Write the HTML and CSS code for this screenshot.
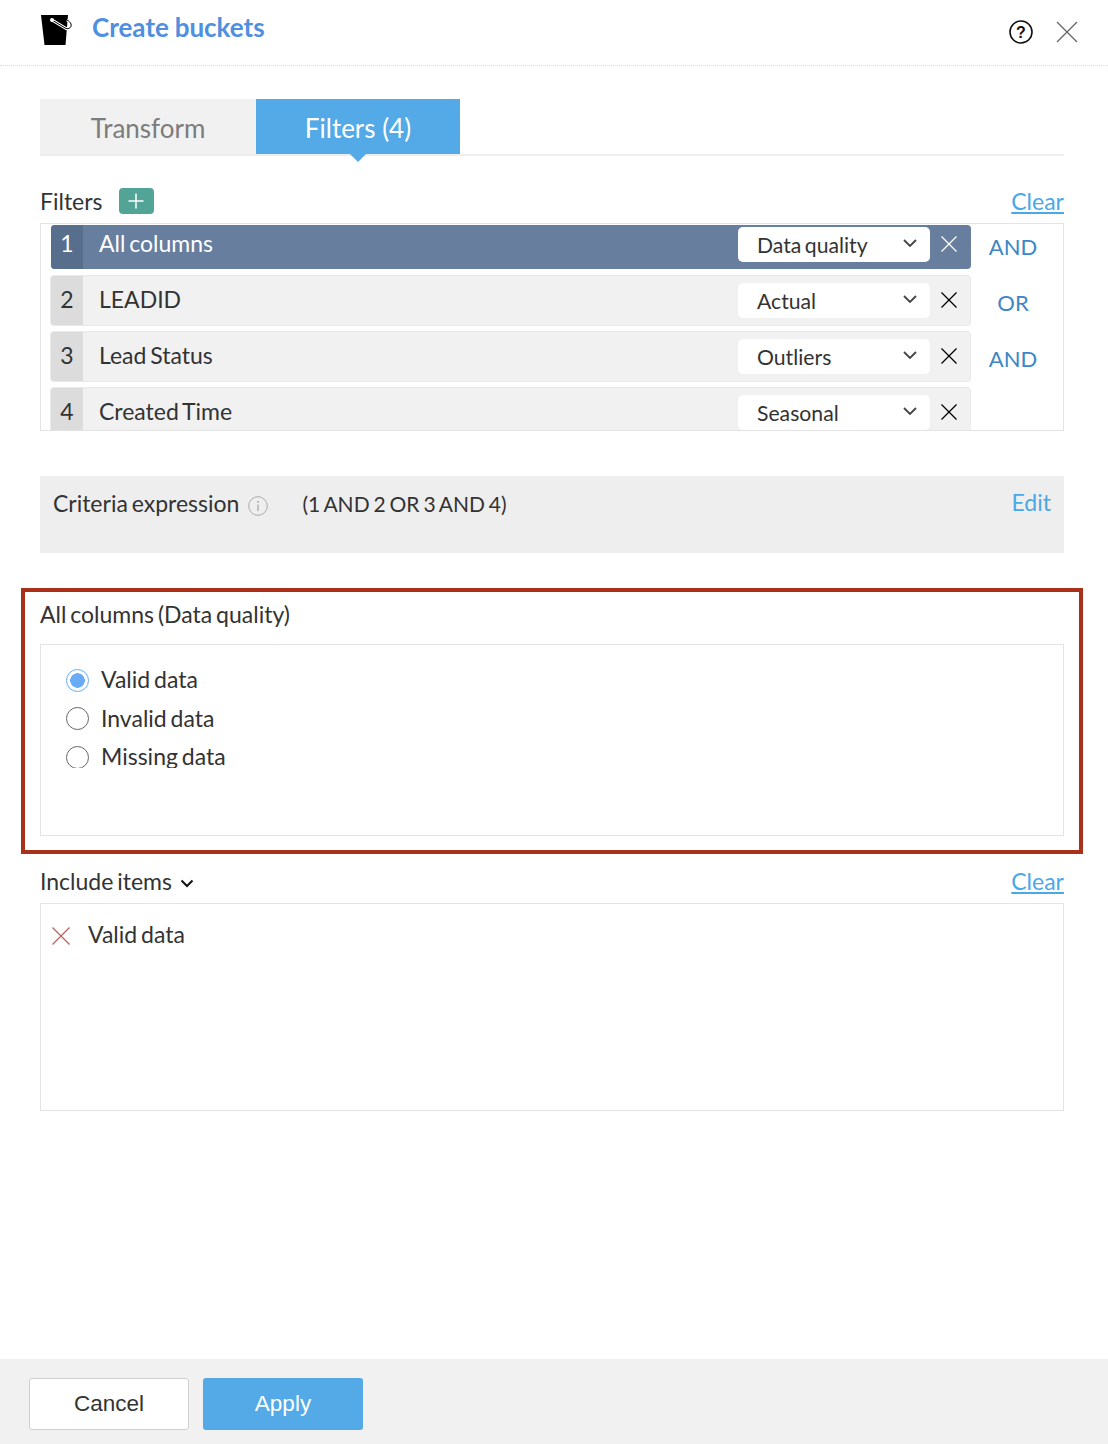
FILE: index.html
```html
<!DOCTYPE html>
<html lang="en">
<head>
<meta charset="utf-8">
<title>Create buckets</title>
<link rel="stylesheet" href="styles.css">
</head>
<body>
<div class="page">
  <header class="header">
    <svg class="logo" viewBox="0 0 32 31" width="32" height="31">
      <path d="M0 0H27L24.500 30H3.500Z" fill="#000"/>
      <path d="M11 5L25 13.500C28 14.500 31 12 30 9C29.500 7.500 28 6 26 5" fill="none" stroke="#fff" stroke-width="3"/>
      <path d="M11 5L25 13.500C28 14.500 31 12 30 9C29.500 7.500 28 6 26 5" fill="none" stroke="#000" stroke-width="1"/>
      <circle cx="11" cy="5" r="2" fill="#fff"/>
    </svg>
    <h1 class="title">Create buckets</h1>
    <div class="header-icons">
      <svg viewBox="0 0 24 24" width="24" height="24"><circle cx="12" cy="12" r="11" fill="none" stroke="#111" stroke-width="1.600"/><text x="12" y="17.500" class="help-mark">?</text></svg>
      <svg class="close" viewBox="0 0 22 22" width="22" height="22"><path d="M1 1L21 21M21 1L1 21" stroke="#666" stroke-width="1.300" fill="none"/></svg>
    </div>
  </header>

  <main class="main">
    <div class="tabs">
      <div class="tab">Transform</div>
      <div class="tab tab-active">Filters (4)</div>
    </div>

    <div class="label-row filters-label">
      <div class="label-left">
        <span>Filters</span>
        <span class="add"><svg viewBox="0 0 18 18" width="18" height="18"><path d="M9 1.500V16.500M1.500 9H16.500" stroke="#fff" stroke-width="1.500"/></svg></span>
      </div>
      <a class="link">Clear</a>
    </div>

    <div class="filter-box">
      <div class="filter-rows">
        <div class="filter-row row-active">
          <div class="num">1</div>
          <div class="name">All columns</div>
          <div class="select"><span class="select-text">Data quality</span><svg class="chev" viewBox="0 0 14 8" width="14" height="8"><path d="M1 1L7 7L13 1" fill="none" stroke="#444" stroke-width="1.800"/></svg></div>
          <svg class="x" viewBox="0 0 16 16" width="16" height="16"><path d="M0.500 0.500L15.500 15.500M15.500 0.500L0.500 15.500" stroke="#fff" stroke-width="1.300"/></svg>
        </div>
        <div class="filter-row">
          <div class="num">2</div>
          <div class="name">LEADID</div>
          <div class="select"><span class="select-text">Actual</span><svg class="chev" viewBox="0 0 14 8" width="14" height="8"><path d="M1 1L7 7L13 1" fill="none" stroke="#444" stroke-width="1.800"/></svg></div>
          <svg class="x" viewBox="0 0 16 16" width="16" height="16"><path d="M0.500 0.500L15.500 15.500M15.500 0.500L0.500 15.500" stroke="#000" stroke-width="1.300"/></svg>
        </div>
        <div class="filter-row">
          <div class="num">3</div>
          <div class="name">Lead Status</div>
          <div class="select"><span class="select-text">Outliers</span><svg class="chev" viewBox="0 0 14 8" width="14" height="8"><path d="M1 1L7 7L13 1" fill="none" stroke="#444" stroke-width="1.800"/></svg></div>
          <svg class="x" viewBox="0 0 16 16" width="16" height="16"><path d="M0.500 0.500L15.500 15.500M15.500 0.500L0.500 15.500" stroke="#000" stroke-width="1.300"/></svg>
        </div>
        <div class="filter-row">
          <div class="num">4</div>
          <div class="name">Created Time</div>
          <div class="select"><span class="select-text">Seasonal</span><svg class="chev" viewBox="0 0 14 8" width="14" height="8"><path d="M1 1L7 7L13 1" fill="none" stroke="#444" stroke-width="1.800"/></svg></div>
          <svg class="x" viewBox="0 0 16 16" width="16" height="16"><path d="M0.500 0.500L15.500 15.500M15.500 0.500L0.500 15.500" stroke="#000" stroke-width="1.300"/></svg>
        </div>
      </div>
      <div class="ops">
        <div class="op">AND</div>
        <div class="op">OR</div>
        <div class="op">AND</div>
      </div>
    </div>

    <div class="criteria">
      <div class="criteria-left">
        <span>Criteria expression</span>
        <svg class="info" viewBox="0 0 20 20" width="20" height="20"><circle cx="10" cy="10" r="9.300" fill="none" stroke="#aaa" stroke-width="1"/><path d="M10 8.500V15" stroke="#999" stroke-width="1.100"/><circle cx="10" cy="5.800" r="0.900" fill="#999"/></svg>
        <span class="expr">(1 AND 2 OR 3 AND 4)</span>
      </div>
      <a class="edit">Edit</a>
    </div>

    <section class="highlight">
      <div class="hl-title">All columns (Data quality)</div>
      <div class="options">
        <div class="option-list">
          <label class="option"><span class="radio radio-on"></span>Valid data</label>
          <label class="option"><span class="radio"></span>Invalid data</label>
          <label class="option"><span class="radio"></span>Missing data</label>
        </div>
      </div>
    </section>

    <div class="label-row include-label">
      <div class="label-left include-left">
        <span>Include items</span>
        <svg viewBox="0 0 14 9" width="14" height="9"><path d="M1.500 1.500L7 7L12.500 1.500" fill="none" stroke="#111" stroke-width="2"/></svg>
      </div>
      <a class="link">Clear</a>
    </div>
    <div class="include-box">
      <svg viewBox="0 0 18 18" width="18" height="18"><path d="M0.500 0.500L17.500 17.500M17.500 0.500L0.500 17.500" stroke="#b9605c" stroke-width="1.200"/></svg>
      <span>Valid data</span>
    </div>
  </main>

  <footer class="footer">
    <button class="btn btn-cancel">Cancel</button>
    <button class="btn btn-apply">Apply</button>
  </footer>
</div>
</body>
</html>
```
FILE: styles.css
```css
* { box-sizing: border-box; }
html, body { margin: 0; padding: 0; }
body {
  font-family: Lato, "Open Sans", sans-serif;
  color: #333;
  background: #fff;
  font-size: 22px;
  word-spacing: -2px;
}
.page {
  width: 1108px;
  height: 1444px;
  display: flex;
  flex-direction: column;
  overflow: hidden;
}
.header {
  height: 66px;
  flex: none;
  display: flex;
  align-items: flex-start;
  padding: 15px 30px 0 41px;
  border-bottom: 1px dotted #dcdcdc;
}
.logo { flex: none; }
.title {
  margin: -4px 0 0 19px;
  font-size: 26px;
  line-height: 32px;
  font-weight: 700;
  color: #4f8fdf;
  word-spacing: -0.500px;
}
.header-icons {
  margin-left: auto;
  display: flex;
  align-items: center;
  gap: 23px;
  padding-top: 5px;
}
.help-mark {
  font-family: "Liberation Sans", sans-serif;
  font-size: 16px;
  font-weight: 700;
  text-anchor: middle;
  fill: #111;
}
.main {
  flex: 1;
  padding: 33px 44px 0 40px;
}
.tabs {
  display: flex;
  height: 57px;
  border-bottom: 2px solid #eee;
}
.tab {
  width: 216px;
  height: 55px;
  background: #f1f1f1;
  color: #7c7c7c;
  font-size: 26px;
  line-height: 59px;
  text-align: center;
  word-spacing: 0;
}
.tab-active {
  width: 204px;
  background: #53aae6;
  color: #fff;
  position: relative;
}
.tab-active::after {
  content: "";
  position: absolute;
  left: 94px;
  top: 55px;
  border: 8px solid transparent;
  border-top-color: #53aae6;
  border-bottom: 0;
}
.label-row {
  display: flex;
  justify-content: space-between;
  align-items: center;
}
.filters-label {
  height: 34px;
  margin-top: 28px;
  margin-bottom: 5px;
  font-size: 23px;
  line-height: 34px;
}
.label-left {
  display: flex;
  align-items: center;
  gap: 16px;
}
.add {
  width: 35px;
  height: 26px;
  border-radius: 4px;
  background: #52a596;
  display: flex;
  align-items: center;
  justify-content: center;
}
.link {
  color: #4aa8e8;
  text-decoration: underline;
  font-size: 23px;
}
.filter-box {
  height: 208px;
  border: 1px solid #e3e3e3;
  display: flex;
  overflow: hidden;
  padding: 1px 0 0 9px;
}
.filter-rows {
  width: 921px;
  display: flex;
  flex-direction: column;
  gap: 5px;
  flex: none;
}
.filter-row {
  height: 51px;
  flex: none;
  background: #f1f1f1;
  border: 1px solid #e9e9e9;
  border-radius: 4px;
  display: flex;
  align-items: flex-start;
  overflow: hidden;
}
.row-active {
  height: 44px;
  margin: 0 0 1px 1px;
  background: #677e9f;
  border: 0;
  color: #fff;
}
.num {
  width: 32px;
  height: 100%;
  flex: none;
  background: #dcdcdc;
  text-align: center;
  font-size: 23px;
  line-height: 47px;
}
.row-active .num {
  background: #586e8d;
}
.name {
  flex: 1;
  padding-left: 16px;
  font-size: 23px;
  line-height: 47px;
}
.row-active .name,
.row-active .num {
  line-height: 37px;
}
.select {
  width: 192px;
  height: 35px;
  margin-top: 7px;
  background: #fff;
  border-radius: 5px;
  color: #333;
  font-size: 21.200px;
  line-height: 35px;
  padding: 0 13px 0 19px;
  display: flex;
  align-items: center;
  justify-content: space-between;
  flex: none;
}
.select-text { padding-top: 2px; }
.row-active .select {
  margin-top: 2px;
}
.chev { margin-top: -3px; }
.x {
  flex: none;
  margin: 16px 13px 0 11px;
}
.row-active .x {
  margin: 11px 14px 0 11px;
}
.ops {
  flex: 1;
  display: flex;
  flex-direction: column;
  color: #3d86c6;
  font-size: 22px;
  text-align: center;
  padding: 5px 8px 0 0;
}
.op {
  height: 56px;
  line-height: 34px;
}
.criteria {
  height: 77px;
  margin-top: 45px;
  background: #eee;
  padding: 9px 13px 0;
  display: flex;
  justify-content: space-between;
  align-items: flex-start;
  font-size: 23px;
  line-height: 34px;
}
.criteria-left {
  display: flex;
  align-items: center;
}
.info { margin: 5px 0 0 9px; }
.expr {
  margin-left: 34px;
  padding-top: 2px;
  font-size: 21px;
  word-spacing: -1.500px;
}
.edit {
  color: #4aa8e8;
}
.highlight {
  margin: 35px -19px 0 -19px;
  height: 266px;
  border: 4px solid #a93019;
  padding: 0 15px;
}
.hl-title {
  height: 52px;
  padding-top: 5px;
  font-size: 23px;
  line-height: 34px;
}
.options {
  height: 192px;
  border: 1px solid #e3e3e3;
  padding: 15px 0 0 25px;
  font-size: 23px;
}
.option-list {
  height: 108px;
  overflow: hidden;
}
.option {
  display: flex;
  align-items: center;
  height: 38.500px;
  gap: 12px;
  line-height: 38px;
}
.radio {
  width: 23px;
  height: 23px;
  margin-top: 2px;
  border-radius: 50%;
  border: 1px solid #666;
  background: #fff;
  flex: none;
}
.radio-on {
  border-color: #6aabf5;
  background: radial-gradient(circle, #6aabf5 0 7px, #fff 7.500px);
}
.include-label {
  height: 34px;
  margin-top: 10px;
  margin-bottom: 5px;
  font-size: 23px;
}
.include-left { gap: 8px; }
.include-left svg { margin-top: 4px; }
.include-box {
  height: 208px;
  border: 1px solid #e3e3e3;
  padding: 13px 0 0 11px;
  display: flex;
  align-items: flex-start;
  gap: 18px;
  font-size: 23px;
  line-height: 34px;
}
.include-box svg { margin-top: 10px; }
.footer {
  height: 85px;
  flex: none;
  background: #f1f1f1;
  padding: 19px 29px 0;
  display: flex;
  align-items: flex-start;
  gap: 14px;
}
.btn {
  width: 160px;
  height: 52px;
  border-radius: 3px;
  font-family: "Liberation Sans", Arial, sans-serif;
  font-size: 22.500px;
  word-spacing: 0;
}
.btn-cancel {
  background: #fff;
  border: 1px solid #d0d0d0;
  color: #333;
}
.btn-apply {
  background: #53aae6;
  border: 0;
  color: #fff;
}
```
